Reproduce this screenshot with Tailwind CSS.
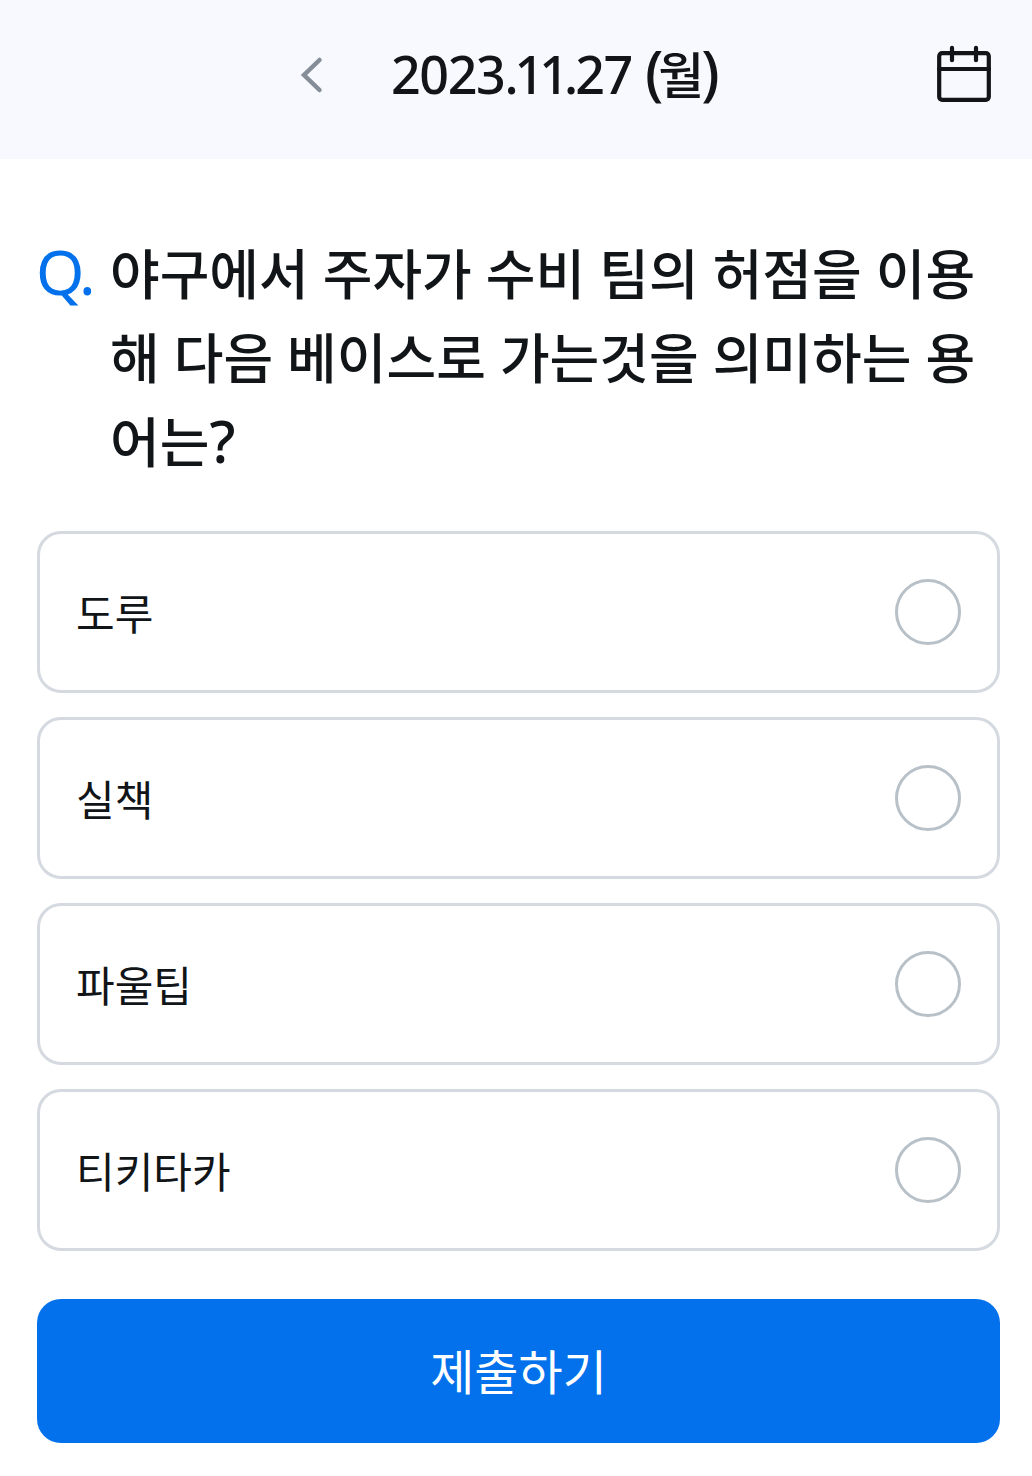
<!DOCTYPE html>
<html lang="ko">
<head>
  <meta charset="UTF-8" />
  <title>Daily Quiz</title>
  <script src="https://cdn.jsdelivr.net/npm/@tailwindcss/browser@4"></script>
</head>
<body class="bg-white min-h-screen text-[#111518] font-['Noto_Sans','Noto_Sans_CJK_KR',sans-serif]">

  <!-- Date bar -->
  <header class="h-[159px] bg-[#f8f9fe] grid grid-cols-[391px_1fr_96px] items-start">
    <button class="justify-self-end mr-[68px] mt-[56px]" aria-label="이전">
      <svg class="w-6 h-[38px]" viewBox="0 0 24 38" fill="none" stroke="#858e98" stroke-width="4.5" stroke-linecap="round">
        <path d="M20.5 4L5 19L20.5 34" />
      </svg>
    </button>
    <h1 class="mt-[33px] h-[76px] flex items-baseline text-[52px] leading-[76px] font-medium whitespace-nowrap">
      <span class="tracking-[-1.4px]">2023</span>
      <span class="tracking-[-4px]">.</span>
      <span class="tracking-[-5px]">11</span>
      <span class="tracking-[-3px]">.</span>
      <span class="tracking-[-1.4px]">27</span>
      <span class="ml-[13px] text-[59px] leading-[76px] tracking-[-5px]">(</span>
      <span class="text-[50px] leading-[76px] tracking-[-3px]">월</span>
      <span class="text-[59px] leading-[76px]">)</span>
    </h1>
    <button class="mt-[45px]" aria-label="달력">
      <svg class="w-[56px] h-[58px]" viewBox="0 0 56 58" fill="none" stroke="#111518" stroke-width="4.2" stroke-linecap="round">
        <rect x="3.2" y="8.2" width="49.6" height="46.6" rx="3" />
        <path d="M3 24H53M16 2.8V15.2M40 2.8V15.2" />
      </svg>
    </button>
  </header>

  <main class="pl-[37px] pr-8 pt-[73px]">
    <h2 class="flex text-[54px] leading-[84px] font-medium">
      <span class="w-[73px] shrink-0 -mt-[3px] -ml-px mr-px text-[62px] leading-[84px] font-normal text-[#0371eb] tracking-[-3px]">Q.</span>
      <span class="whitespace-nowrap">야구에서 주자가 수비 팀의 허점을 이용<br>해 다음 베이스로 가는것을 의미하는 용<br>어는<span class="text-[58px] leading-none">?</span></span>
    </h2>

    <!-- Answers -->
    <div class="mt-[47px] flex flex-col gap-6 text-[42px]">
      <label class="h-[162px] border-3 border-[#d5d9e0] rounded-3xl flex items-center justify-between px-9">
        <span class="pt-[3px]">도루</span>
        <span class="size-[66px] rounded-full border-3 border-[#b8c0c8]"></span>
      </label>
      <label class="h-[162px] border-3 border-[#d5d9e0] rounded-3xl flex items-center justify-between px-9">
        <span class="pt-[3px]">실책</span>
        <span class="size-[66px] rounded-full border-3 border-[#b8c0c8]"></span>
      </label>
      <label class="h-[162px] border-3 border-[#d5d9e0] rounded-3xl flex items-center justify-between px-9">
        <span class="pt-[3px]">파울팁</span>
        <span class="size-[66px] rounded-full border-3 border-[#b8c0c8]"></span>
      </label>
      <label class="h-[162px] border-3 border-[#d5d9e0] rounded-3xl flex items-center justify-between px-9">
        <span class="pt-[3px]">티키타카</span>
        <span class="size-[66px] rounded-full border-3 border-[#b8c0c8]"></span>
      </label>
    </div>

    <button class="mt-12 w-full h-36 rounded-3xl bg-[#0371eb] text-white text-[48px] pt-[2px]">제출하기</button>
  </main>

</body>
</html>
